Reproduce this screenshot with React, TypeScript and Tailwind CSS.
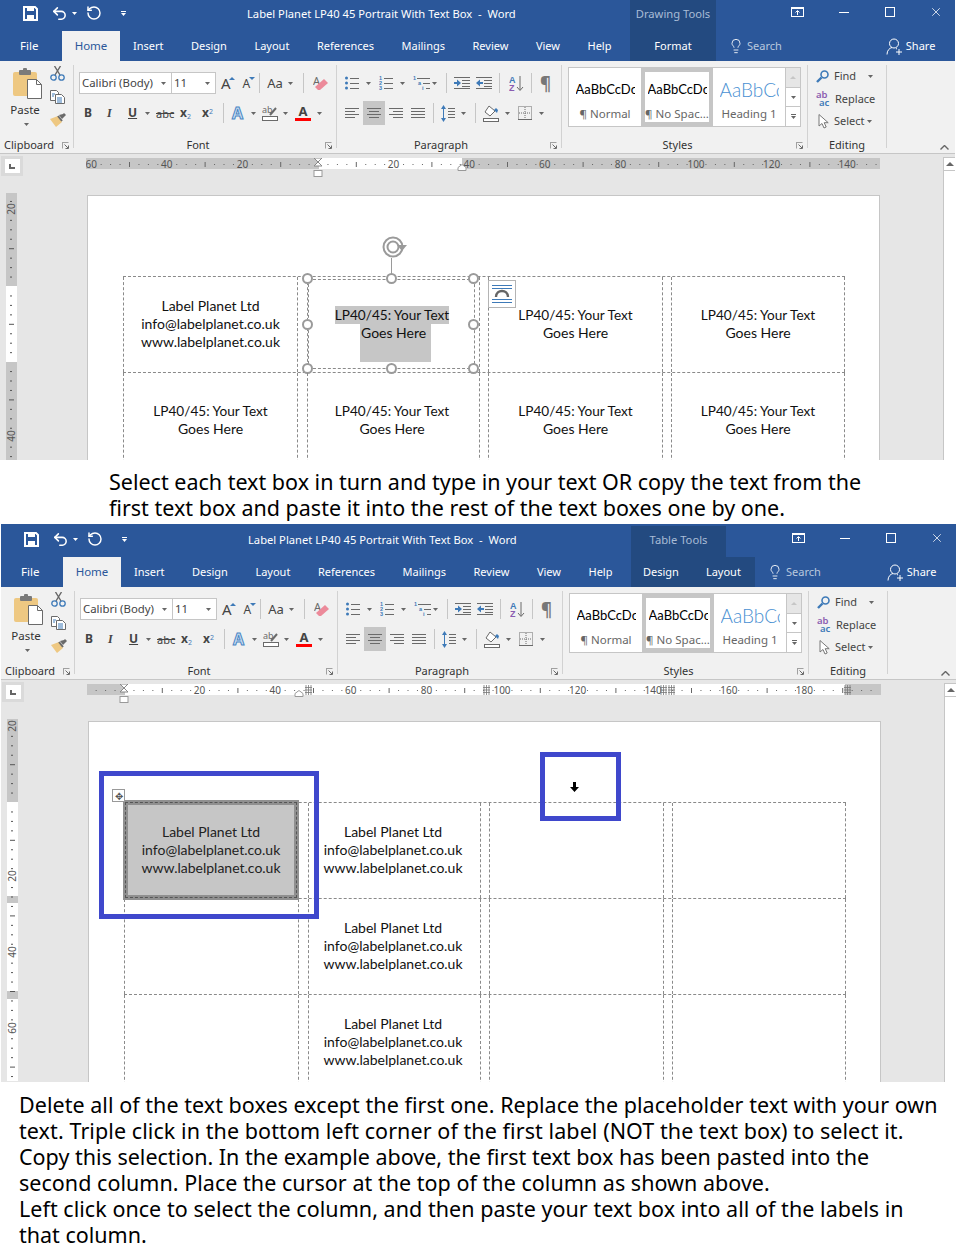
import type { ReactNode } from "react";
import { Lightbulb, RotateCcw, Undo2, X } from "lucide-react";

const GRAY = "#6a6a6a";
const BLUE = "#3e7ab8";

const Svg = ({ w, h, className = "", children }: { w: number; h: number; className?: string; children: ReactNode }) => (
  <svg width={w} height={h} viewBox={`0 0 ${w} ${h}`} className={`shrink-0 ${className}`}>
    {children}
  </svg>
);

const Caret = ({ className = "", color = "#666" }: { className?: string; color?: string }) => (
  <Svg w={5} h={3} className={className}>
    <polygon points="0,0 5,0 2.5,3" fill={color} />
  </Svg>
);

const Divider = ({ className = "" }: { className?: string }) => <span className={`w-px h-[20px] bg-[#c6c6c6] shrink-0 ${className}`} />;

// paragraph glyphs
const Lines = ({ className = "", rows }: { className?: string; rows: [number, number][] }) => (
  <Svg w={14} h={12} className={className}>
    {rows.map(([a, b], i) => (
      <rect key={i} x={a} y={i * 3 + 1} width={b - a} height={1} fill={GRAY} />
    ))}
  </Svg>
);

const Bullets = ({ className = "" }: { className?: string }) => (
  <Svg w={14} h={14} className={className}>
    {[2, 7, 12].map((y) => (
      <g key={y}>
        <circle cx={1.5} cy={y} r={1.5} fill={BLUE} />
        <rect x={5} y={y} width={9} height={1} fill={GRAY} />
      </g>
    ))}
  </Svg>
);

const Numbered = ({ className = "" }: { className?: string }) => (
  <Svg w={14} h={14} className={className}>
    {[1, 2, 3].map((n, i) => (
      <g key={n}>
        <text x={0} y={i * 5 + 4} fontSize={5.5} fontWeight={700} fill={BLUE} fontFamily="Liberation Sans, sans-serif">{n}</text>
        <rect x={5} y={i * 5 + 2} width={9} height={1} fill={GRAY} />
      </g>
    ))}
  </Svg>
);

const MultiLevel = ({ className = "" }: { className?: string }) => (
  <Svg w={17} h={14} className={className}>
    <text x={0} y={4} fontSize={5.5} fontWeight={700} fill={BLUE} fontFamily="Liberation Sans, sans-serif">1</text>
    <rect x={4} y={2} width={13} height={1} fill={GRAY} />
    <text x={5} y={9} fontSize={5.5} fontWeight={700} fill={BLUE} fontFamily="Liberation Sans, sans-serif">a</text>
    <rect x={10} y={7} width={7} height={1} fill={GRAY} />
    <text x={9} y={14} fontSize={5.5} fontWeight={700} fill={BLUE} fontFamily="Liberation Sans, sans-serif">i</text>
    <rect x={13} y={12} width={4} height={1} fill={GRAY} />
  </Svg>
);

const Indent = ({ className = "", flip = false }: { className?: string; flip?: boolean }) => (
  <Svg w={16} h={12} className={className}>
    <rect x={0} y={0} width={16} height={1} fill={GRAY} />
    <rect x={8} y={3} width={8} height={1} fill={GRAY} />
    <rect x={8} y={6} width={8} height={1} fill={GRAY} />
    <rect x={8} y={9} width={8} height={1} fill={GRAY} />
    <rect x={0} y={11} width={16} height={1} fill={GRAY} />
    {flip ? (
      <polygon points="7,6 3,2.5 3,5 0,5 0,7 3,7 3,9.5" fill={BLUE} />
    ) : (
      <polygon points="0,6 4,2.5 4,5 7,5 7,7 4,7 4,9.5" fill={BLUE} />
    )}
  </Svg>
);

const Sort = ({ className = "" }: { className?: string }) => (
  <Svg w={15} h={17} className={className}>
    <text x={0} y={8} fontSize={9} fontWeight={700} fill={BLUE} fontFamily="Liberation Sans, sans-serif">A</text>
    <text x={0} y={16} fontSize={9} fontWeight={700} fill="#8a5cb0" fontFamily="Liberation Sans, sans-serif">Z</text>
    <path d="M11 1v14M8 12l3 3.5 3-3.5" stroke={GRAY} fill="none" />
  </Svg>
);

const LineSpacing = ({ className = "" }: { className?: string }) => (
  <Svg w={14} h={17} className={className}>
    <path d="M2.5 2v13" stroke={BLUE} />
    <polygon points="2.5,0 5,4 0,4" fill={BLUE} />
    <polygon points="2.5,17 5,13 0,13" fill={BLUE} />
    {[3, 6, 9, 12].map((y) => (
      <rect key={y} x={7} y={y} width={7} height={1} fill={GRAY} />
    ))}
  </Svg>
);

const Shading = ({ className = "" }: { className?: string }) => (
  <Svg w={16} h={17} className={className}>
    <path d="M6 1l-4 6 5 4 5-5z" fill="#fff" stroke={GRAY} />
    <path d="M11 5l3 3 1-3-2-2z" fill={BLUE} />
    <rect x={0.5} y={13.5} width={15} height={3} fill="#fff" stroke={GRAY} />
  </Svg>
);

const Borders = ({ className = "" }: { className?: string }) => (
  <Svg w={14} h={14} className={className}>
    <rect x={0.5} y={0.5} width={13} height={13} fill="none" stroke={GRAY} strokeDasharray="1 1" />
    <path d="M7 1v12M1 7h12" stroke={GRAY} strokeDasharray="1 1" />
    <rect x={0} y={13} width={14} height={1} fill={GRAY} />
  </Svg>
);

const Clipboard = () => (
  <Svg w={29} h={31}>
    <rect x={0} y={4} width={24} height={24} rx={2} fill="#eec882" />
    <rect x={6} y={2} width={12} height={5} rx={1} fill="#7a7a7a" />
    <rect x={10} y={0} width={4} height={4} rx={1} fill="#7a7a7a" />
    <path d="M14.5 11.5h9l5 5v14h-14z" fill="#fff" stroke={GRAY} />
    <path d="M23.5 11.5v5h5" fill="none" stroke={GRAY} />
  </Svg>
);

const Cut = () => (
  <Svg w={15} h={15}>
    <path d="M4.500 0l5.500 9M10.500 0L5 9" stroke="#666" strokeWidth={1.4} />
    <circle cx={3.500} cy={11.500} r={2.700} fill="none" stroke={BLUE} strokeWidth={1.3} />
    <circle cx={11.500} cy={11.500} r={2.700} fill="none" stroke={BLUE} strokeWidth={1.3} />
  </Svg>
);

const CopyIcon = ({ className = "" }: { className?: string }) => (
  <Svg w={15} h={14} className={className}>
    <path d="M.5.5h6l2 2v8h-8z" fill="#fff" stroke={GRAY} />
    <path d="M5.5 4.5h6l3 3v6h-9z" fill="#fff" stroke={GRAY} />
    <path d="M7 8h5M7 10h5M7 12h5M2 4h3M2 6h2" stroke={BLUE} />
  </Svg>
);

const Brush = ({ className = "" }: { className?: string }) => (
  <Svg w={16} h={14} className={className}>
    <path d="M0 6l8-3 4 6-6 5z" fill="#eec882" />
    <path d="M9 2l3 4 4-4-2-2-1 1z" fill="#6a6a6a" />
    <path d="M8 3l4 5" stroke="#6a6a6a" strokeWidth={2} />
  </Svg>
);

const Eraser = ({ className = "" }: { className?: string }) => (
  <Svg w={15} h={16} className={className}>
    <text x={0} y={10} fontSize={11} fill={GRAY} fontFamily="Noto Sans, sans-serif">A</text>
    <path d="M2 12l9-8 4 4-8 7H5z" fill="#ec8a9a" />
  </Svg>
);

const Magnifier = ({ className = "" }: { className?: string }) => (
  <Svg w={13} h={13} className={className}>
    <circle cx={8.5} cy={4.5} r={3.5} fill="none" stroke={BLUE} strokeWidth={1.6} />
    <path d="M5.5 7.5L1 12" stroke={BLUE} strokeWidth={2.4} />
  </Svg>
);

const Pointer = ({ className = "" }: { className?: string }) => (
  <Svg w={11} h={15} className={className}>
    <path d="M1 .5v11.500l3-2.500 2 4.500 2.200-1-2-4.300h4z" fill="#fff" stroke="#777" />
  </Svg>
);

const SaveIcon = () => (
  <Svg w={15} h={15}>
    <path d="M1 1h11l2 2v11H1z" fill="none" stroke="#fff" strokeWidth={2} />
    <rect x={4} y={1} width={7} height={4} fill="#fff" />
    <rect x={4} y={9} width={7} height={5} fill="#fff" />
  </Svg>
);

const ShareIcon = ({ className = "" }: { className?: string }) => (
  <Svg w={17} h={17} className={className}>
    <circle cx={8} cy={5.5} r={4.5} fill="none" stroke="#fff" />
    <path d="M1 16.5c0-4 2.5-6.500 5-7M10 10.500l1 .5" fill="none" stroke="#fff" />
    <path d="M13 11v6M10 14h6" stroke="#fff" />
  </Svg>
);

const RestoreRibbon = ({ className = "" }: { className?: string }) => (
  <Svg w={13} h={10} className={className}>
    <rect x={0.5} y={0.5} width={12} height={9} fill="none" stroke="#fff" />
    <rect x={0} y={0} width={13} height={2} fill="#fff" />
    <path d="M6.500 8V4M4.500 5.500l2-2 2 2" fill="none" stroke="#fff" />
  </Svg>
);

const LayoutOptions = () => (
  <span className="absolute left-[-1px] top-[3px] flex w-[28px] h-[28px] items-center justify-center border border-[#b4b4b4] bg-white">
    <Svg w={20} h={19}>
      <rect x={0} y={0} width={20} height={1} fill={BLUE} />
      <rect x={0} y={3} width={20} height={1} fill={BLUE} />
      <path d="M4 12c0-8 12-8 12 0" fill="none" stroke="#666" strokeWidth={2.4} />
      <rect x={0} y={14} width={20} height={1} fill={BLUE} />
      <rect x={0} y={17} width={20} height={1} fill={BLUE} />
    </Svg>
  </span>
);

const Launcher = ({ className = "" }: { className?: string }) => (
  <Svg w={7} h={7} className={className}>
    <path d="M0 .5h6.500M.5 0v6.500" stroke="#a0a0a0" />
    <path d="M2.500 2.500L6 6M3.500 6.500h3v-3" fill="none" stroke={GRAY} />
  </Svg>
);

const Group = ({ className, label, labelClass = "justify-center", launcher, children }: { className: string; label: string; labelClass?: string; launcher?: ReactNode; children: ReactNode }) => (
  <div className={`relative flex flex-col shrink-0 h-full border-r border-[#d2d2d2] ${className}`}>
    <div className="flex-1 min-h-0">{children}</div>
    <div className={`flex items-center h-[16px] -mb-[4px] text-[11px] text-[#333] leading-none ${labelClass}`}>
      {label}
    </div>
    {launcher}
  </div>
);

const Ribbon = () => (
  <div className="flex h-[93px] pt-[4px] pb-[5px] bg-[#f1f1f1] border-b border-[#c6c6c6] text-[#444]">
    <Group
      className="w-[74px]"
      label="Clipboard"
      labelClass="pl-[4px]"
      launcher={<Launcher className="absolute right-[4px] -bottom-[1px]" />}
    >
      <div className="flex pl-[14px] pt-[3px]">
        <div className="flex flex-col items-center w-[26px]">
          <Clipboard />
          <span className="mt-[3px] -ml-[4px] text-[11.500px] leading-[16px] text-[#333]">Paste</span>
          <Caret className="mt-[5px] -ml-[2px]" />
        </div>
        <div className="flex flex-col ml-[10px] -mt-[2px]">
          <Cut />
          <CopyIcon className="mt-[9px]" />
          <Brush className="mt-[9px]" />
        </div>
      </div>
    </Group>

    <Group
      className="w-[263px]"
      label="Font"
      labelClass="justify-center pr-[14px]"
      launcher={<Launcher className="absolute right-[4px] -bottom-[1px]" />}
    >
      <div className="flex items-center h-[22px] mt-[7px] pl-[5px]">
        <div className="flex items-center w-[93px] h-[22px] pl-[2px] bg-white border border-[#c6c6c6] text-[11.400px] text-[#444]">
          <span className="flex-1">Calibri (Body)</span>
          <Caret className="mr-[5px]" />
        </div>
        <div className="flex items-center w-[44px] h-[22px] pl-[2px] bg-white border border-l-0 border-[#c6c6c6] text-[11.400px]">
          <span className="flex-1">11</span>
          <Caret className="mr-[5px]" />
        </div>
        <span className="relative ml-[5px] text-[15px] leading-none">A<span className="absolute -right-[4px] top-[1px] w-0 h-0 border-x-[3px] border-b-[3px] border-x-transparent border-b-[#3e7ab8]" /></span>
        <span className="relative ml-[12px] text-[12px] leading-none mt-[2px]">A<span className="absolute -right-[5px] -top-[1px] w-0 h-0 border-x-[3px] border-t-[3px] border-x-transparent border-t-[#3e7ab8]" /></span>
        <Divider className="ml-[9px]" />
        <span className="ml-[7px] w-[16px] text-[13px] leading-none">Aa</span>
        <Caret className="ml-[5px]" />
        <Divider className="ml-[10px]" />
        <Eraser className="ml-[9px]" />
      </div>
      <div className="flex items-center h-[22px] mt-[8px] pl-[10px]">
        <span className="w-[8px] text-[12px] font-bold leading-none">B</span>
        <span className="ml-[15px] w-[7px] text-[12px] font-bold italic leading-none" style={{ fontFamily: "Liberation Serif, serif" }}>I</span>
        <span className="ml-[14px] w-[9px] text-[12px] font-bold underline leading-none">U</span>
        <Caret className="ml-[8px]" />
        <span className="ml-[6px] w-[16px] text-[11px] line-through leading-none">abc</span>
        <span className="ml-[8px] w-[13px] text-[12px] font-bold leading-none">x<sub className="text-[7px] font-normal text-[#3e7ab8]">2</sub></span>
        <span className="ml-[9px] w-[12px] text-[12px] font-bold leading-none">x<sup className="text-[7px] font-normal text-[#3e7ab8]">2</sup></span>
        <Divider className="ml-[9px]" />
        <span className="ml-[8px] w-[14px] text-[16px] font-bold leading-none text-[#cfe0f2] [-webkit-text-stroke:1px_#4a86c4]">A</span>
        <Caret className="ml-[5px]" />
        <Svg w={16} h={16} className="ml-[6px]">
          <text x={0} y={8} fontSize={9} fill={GRAY} fontFamily="Noto Sans, sans-serif">ab</text>
          <path d="M8 10l6-7" stroke={GRAY} strokeWidth={2} />
          <rect x={0.5} y={11.500} width={15} height={4} fill="#fff" stroke={GRAY} />
        </Svg>
        <Caret className="ml-[5px]" />
        <span className="relative flex flex-col items-center w-[16px] ml-[7px] text-[13px] font-bold leading-none">A<span className="w-full h-[3px] bg-[#ff0000]" /></span>
        <Caret className="ml-[6px]" />
      </div>
    </Group>

    <Group
      className="w-[225px]"
      label="Paragraph"
      labelClass="justify-center pr-[16px]"
      launcher={<Launcher className="absolute right-[4px] -bottom-[1px]" />}
    >
      <div className="flex items-center h-[22px] mt-[7px] pl-[8px]">
        <Bullets />
        <Caret className="ml-[7px]" />
        <Numbered className="ml-[8px]" />
        <Caret className="ml-[7px]" />
        <MultiLevel className="ml-[8px]" />
        <Caret className="ml-[2px]" />
        <Divider className="ml-[9px]" />
        <Indent flip className="ml-[7px]" />
        <Indent className="ml-[6px]" />
        <Divider className="ml-[7px]" />
        <Sort className="ml-[9px]" />
        <Divider className="ml-[7px]" />
        <span className="ml-[8px] text-[17px] font-bold leading-none text-[#777]">¶</span>
      </div>
      <div className="flex items-center h-[22px] mt-[8px] pl-[8px]">
        <Lines rows={[[0, 14], [0, 10], [0, 14], [0, 10]]} />
        <span className="flex items-center justify-center w-[22px] h-[24px] ml-[4px] bg-[#c6c6c6]">
          <Lines rows={[[0, 14], [2, 12], [0, 14], [2, 12]]} />
        </span>
        <Lines className="ml-[4px]" rows={[[0, 14], [4, 14], [0, 14], [4, 14]]} />
        <Lines className="ml-[8px]" rows={[[0, 14], [0, 14], [0, 14], [0, 14]]} />
        <Divider className="ml-[8px]" />
        <LineSpacing className="ml-[7px]" />
        <Caret className="ml-[6px]" />
        <Divider className="ml-[9px]" />
        <Shading className="ml-[7px]" />
        <Caret className="ml-[6px]" />
        <Borders className="ml-[8px]" />
        <Caret className="ml-[7px]" />
      </div>
    </Group>

    <Group
      className="w-[246px]"
      label="Styles"
      labelClass="justify-center pr-[14px]"
      launcher={<Launcher className="absolute right-[4px] -bottom-[1px]" />}
    >
      <div className="flex w-[233px] h-[60px] mt-[2px] ml-[6px] bg-white border border-[#c6c6c6]">
        <StyleItem sample="AaBbCcDc" label="¶ Normal" />
        <StyleItem sample="AaBbCcDc" label="¶ No Spac..." active />
        <StyleItem sample="AaBbCc" label="Heading 1" heading />
        <div className="flex flex-col w-[15px] ml-auto border-l border-[#c6c6c6] divide-y divide-[#c6c6c6]">
          <span className="flex flex-1 items-center justify-center bg-[#e6e6e6]"><span className="w-0 h-0 border-x-[3px] border-b-[3px] border-x-transparent border-b-[#c6c6c6]" /></span>
          <span className="flex flex-1 items-center justify-center"><Caret /></span>
          <span className="flex flex-1 flex-col items-center justify-center gap-[1px]"><span className="w-[5px] h-px bg-[#666]" /><Caret /></span>
        </div>
      </div>
    </Group>

    <Group className="w-[79px]" label="Editing">
      <div className="flex flex-col pl-[8px] pt-[3px] text-[11px] text-[#444]">
        <div className="flex items-center h-[16px]">
          <Magnifier />
          <span className="ml-[5px] w-[26px]">Find</span>
          <Caret className="ml-[8px]" />
        </div>
        <div className="flex items-center h-[16px] mt-[7px]">
          <span className="flex w-[17px] flex-col text-[9.500px] font-semibold leading-[8px]"><span className="text-[#8a5cb0]">ab</span><span className="pl-[3px] text-[#3e7ab8]">ac</span></span>
          <span className="ml-[2px]">Replace</span>
        </div>
        <div className="flex items-center h-[16px] mt-[6px]">
          <Pointer className="ml-[2px]" />
          <span className="ml-[5px]">Select</span>
          <Caret className="ml-[2px]" />
        </div>
      </div>
    </Group>

    <div className="flex flex-1 items-end justify-end pr-[6px] -mb-[2px]">
      <Svg w={9} h={5}>
        <path d="M.5 4.500l4-4 4 4" fill="none" stroke="#666" strokeWidth={1.4} />
      </Svg>
    </div>
  </div>
);

function StyleItem({ sample, label, active, heading }: { sample: string; label: string; active?: boolean; heading?: boolean }) {
  return (
    <div className={`flex flex-col items-center w-[72px] h-[58px] ${active ? "border-4 border-[#c6c6c6] pt-[6px]" : "pt-[10px]"}`}>
      <div className={`flex items-center w-[59px] h-[24px] overflow-hidden whitespace-nowrap ${heading ? "text-[19px] font-light text-[#4a90d2]" : "text-[13px] text-black"}`} style={{ fontFamily: "Lato, sans-serif" }}>
        {sample}
      </div>
      <div className="mt-[4px] text-[11.500px] leading-[16px] text-[#666] whitespace-nowrap">{label}</div>
    </div>
  );
}

const GridMark = ({ x }: { x: number }) => (
  <g>
    <path d={`M${x + 1} 1v10M${x + 3.500} 1v10M${x + 6} 1v10M${x} 3.500h7M${x} 6h7M${x} 8.500h7`} stroke="#777" strokeWidth={0.8} />
  </g>
);

// horizontal ruler, x values are counted from the ruler's left edge
function HRuler({ origin, white, marks = [], right }: { origin: number; white: [number, number]; marks?: number[]; right: number }) {
  const ticks = [];
  for (let n = -40; n < 100; n++) {
    const x = origin + n * 9.45;
    if (x < 1 || x > 792 || n === 0) continue;
    if (n % 8 === 0) {
      ticks.push(
        <text key={n} x={x} y={9.500} textAnchor="middle" fontSize={10} fill="#555" fontFamily="Noto Sans, sans-serif">
          {Math.abs(n / 8) * 20}
        </text>,
      );
    } else if (n % 4 === 0) {
      ticks.push(<rect key={n} x={x} y={4} width={1} height={5} fill="#666" />);
    } else {
      ticks.push(<rect key={n} x={x} y={6} width={1} height={1} fill="#666" />);
    }
  }
  return (
    <Svg w={794} h={20} className="block">
      <rect x={0} y={0} width={794} height={11} fill="#c6c6c6" />
      <rect x={white[0]} y={0} width={white[1] - white[0]} height={11} fill="#fff" />
      {ticks}
      {marks.map((x) => (
        <GridMark key={x} x={x} />
      ))}
      <path d={`M${origin - 4} 0h8l-8 8h8l-8 -8`} fill="#fff" stroke="#888" />
      <rect x={origin - 4} y={12.500} width={8} height={6} fill="#fff" stroke="#999" />
      <path d={`M${right - 4} 12.500v-3l4-3 4 3v3z`} fill="#fff" stroke="#999" />
    </Svg>
  );
}

function VRuler({ height, origin, grays, labels }: { height: number; origin: number; grays: [number, number][]; labels: [number, string][] }) {
  const ticks = [];
  for (let n = -20; n < 60; n++) {
    const y = origin + n * 9.45;
    if (y < 0 || y > height || n === 0 || n % 8 === 0) continue;
    if (n % 4 === 0) ticks.push(<rect key={n} x={3} y={y} width={5} height={1} fill="#555" />);
    else ticks.push(<rect key={n} x={4} y={y} width={2} height={1} fill="#555" />);
  }
  return (
    <Svg w={11} h={height} className="block">
      <rect width={11} height={height} fill="#fff" />
      {grays.map(([a, b]) => (
        <rect key={a} x={0} y={a} width={11} height={b - a} fill="#c6c6c6" />
      ))}
      {ticks}
      {labels.map(([y, t]) => (
        <text key={y} transform={`translate(9 ${y}) rotate(-90)`} textAnchor="middle" fontSize={10} fill="#555" fontFamily="Noto Sans, sans-serif">
          {t}
        </text>
      ))}
    </Svg>
  );
}

const CELL_W = ["w-[175px]", "w-[173px] pr-[3px]", "w-[175px]", "w-[174px]"];
const GAP = ["w-[9px]", "w-[8px]", "w-[8px]"];

const Address = () => (
  <>
    <span>Label Planet Ltd</span>
    <span>info@labelplanet.co.uk</span>
    <span>www.labelplanet.co.uk</span>
  </>
);

const YourText = () => (
  <>
    <span className="text-[13.600px]">LP40/45: Your Text</span>
    <span>Goes Here</span>
  </>
);

function Handle({ className }: { className: string }) {
  return <span className={`absolute w-[11px] h-[11px] rounded-full bg-white border-2 border-[#9a9a9a] ${className}`} />;
}

const SelectedBox = () => (
  <div className="absolute left-0 top-0 w-full h-full">
    <div className="absolute left-0 top-[2px] w-[167px] h-[90px] border border-dashed border-[#8a8a8a]" />
    <span className="absolute left-[83px] -top-[19px] w-px h-[21px] bg-[#9a9a9a]" />
    <Svg w={25} h={24} className="absolute left-[74px] -top-[42px]">
      <circle cx={11} cy={12} r={9.500} fill="none" stroke="#9a9a9a" strokeWidth={2} />
      <circle cx={11} cy={12} r={5.500} fill="none" stroke="#9a9a9a" strokeWidth={2} />
      <polygon points="15,10 25,10 20,16" fill="#9a9a9a" />
    </Svg>
    <Handle className="-left-[6px] -top-[4px]" />
    <Handle className="left-[78px] -top-[4px]" />
    <Handle className="left-[160px] -top-[4px]" />
    <Handle className="-left-[6px] top-[42px]" />
    <Handle className="left-[160px] top-[42px]" />
    <Handle className="-left-[6px] top-[86px]" />
    <Handle className="left-[78px] top-[86px]" />
    <Handle className="left-[160px] top-[86px]" />
  </div>
);

function Cell({ col, children, extra }: { col: number; children?: ReactNode; extra?: ReactNode }) {
  return (
    <div className={`relative flex flex-col items-center justify-center shrink-0 h-[95px] pb-[2px] border-x border-dashed border-[#8a8a8a] text-[14px] leading-[18px] text-[#111] whitespace-nowrap ${CELL_W[col]}`} style={{ fontFamily: "Lato, sans-serif" }}>
      {children}
      {extra}
    </div>
  );
}

function LabelRow({ cells, first }: { cells: ReactNode[]; first?: boolean }) {
  return (
    <div className={`flex border-b border-dashed border-[#8a8a8a] w-[722px] ${first ? "border-t h-[97px]" : "h-[96px]"}`}>
      {cells.map((c, i) => (
        <div key={i} className="contents">
          {c}
          {i < 3 && <span className={`shrink-0 ${GAP[i]}`} />}
        </div>
      ))}
    </div>
  );
}

function Chrome({ ctx, title }: { ctx: "drawing" | "table"; title: string }) {
  const drawing = ctx === "drawing";
  return (
    <div className="text-white">
      <div className="flex h-[31px] text-[11.200px] items-stretch">
        <div className="flex items-center w-[247px] pl-[23px] pb-[5px] shrink-0">
          <SaveIcon />
          <Undo2 size={17} strokeWidth={2.2} className="ml-[13px]" />
          <Caret className="ml-[4px]" color="#fff" />
          <RotateCcw size={16} strokeWidth={2.2} className="ml-[9px]" />
          <span className="ml-[19px] flex flex-col items-center gap-[1px]"><span className="w-[5px] h-px bg-white" /><Caret color="#fff" /></span>
        </div>
        <div className="flex items-center w-[383px] pb-[3px] shrink-0 whitespace-pre">{title}</div>
        <div className={`flex items-center justify-center pb-[3px] shrink-0 bg-[#234a80] text-[#a9bcd6] ${drawing ? "w-[86px]" : "w-[95px]"}`}>
          {drawing ? "Drawing Tools" : "Table Tools"}
        </div>
        <div className={`flex items-center pb-[7px] ${drawing ? "ml-[75px]" : "ml-[66px]"}`}>
          <RestoreRibbon />
          <span className="ml-[35px] w-[10px] h-px bg-white" />
          <span className="ml-[36px] w-[10px] h-[10px] border border-white" />
          <X size={14} strokeWidth={1.3} className="ml-[34px]" />
        </div>
      </div>
      <div className="flex h-[30px] items-stretch text-[11px]">
        <div className="flex items-center w-[62px] pl-[20px] text-[11.500px] shrink-0">File</div>
        <div className="flex items-center justify-center w-[58px] bg-[#f1f1f1] text-[11.500px] text-[#2b579a] shrink-0">Home</div>
        <div className="flex items-center w-[510px] pl-[13px] gap-[27.500px] shrink-0 whitespace-nowrap">
          <span>Insert</span>
          <span>Design</span>
          <span>Layout</span>
          <span>References</span>
          <span>Mailings</span>
          <span>Review</span>
          <span>View</span>
          <span>Help</span>
        </div>
        {drawing ? (
          <div className="flex items-center justify-center w-[86px] bg-[#234a80] shrink-0">Format</div>
        ) : (
          <div className="flex items-center w-[124px] pl-[12px] gap-[27px] bg-[#234a80] shrink-0">
            <span>Design</span>
            <span>Layout</span>
          </div>
        )}
        <div className="flex items-center ml-[12px]">
          <Lightbulb size={16} strokeWidth={1.3} />
          <span className="ml-[3px] text-[#b9c8de]">Search</span>
        </div>
        <div className={`flex items-center ${drawing ? "ml-[104px]" : "ml-[66px]"}`}>
          <ShareIcon />
          <span className="ml-[3px]">Share</span>
        </div>
      </div>
    </div>
  );
}

function WordWindow({ ctx, title, rowsTop, offset, hruler, vruler, overlay, bodyH }: {
  ctx: "drawing" | "table";
  title: string;
  rowsTop: ReactNode[][];
  offset: string;
  hruler: ReactNode;
  vruler: ReactNode;
  overlay?: ReactNode;
  bodyH: string;
}) {
  return (
    <div className={`flex flex-col overflow-hidden bg-[#2b579a] w-[955px] ${offset}`}>
      <Chrome ctx={ctx} title={title} />
      <Ribbon />
      <div className={`flex bg-[#e6e6e6] ${bodyH}`}>
        <div className="flex flex-col w-[943px] min-h-0">
          <div className="flex h-[39px] shrink-0 pt-[4px]">
            <div className="flex items-start w-[86px] pl-[1px] shrink-0">
              <div className="flex w-[22px] h-[20px] -mt-[2px] items-center justify-center bg-[#dadada]">
                <div className="flex w-[15px] h-[14px] items-center justify-center bg-white">
                  <span className="w-[6px] h-[5px] border-l-2 border-b-2 border-[#666]" />
                </div>
              </div>
            </div>
            {hruler}
          </div>
          <div className="flex flex-1 min-h-0 pl-[6px]">
            <div className="w-[11px] shrink-0 overflow-hidden">{vruler}</div>
            <div className="relative w-[793px] ml-[70px] mt-[2px] pt-[80px] pl-[35px] bg-white border-x border-t border-[#c6c6c6] overflow-hidden">
              {rowsTop.map((cells, i) => (
                <LabelRow key={i} cells={cells} first={i === 0} />
              ))}
              {overlay}
            </div>
          </div>
        </div>
        <div className="w-[12px] mt-[3px] bg-white border-l border-[#c6c6c6]">
          <div className="flex h-[14px] items-center justify-center border-y border-[#c6c6c6]">
            <span className="w-0 h-0 border-x-[4px] border-b-[4px] border-x-transparent border-b-[#666]" />
          </div>
        </div>
      </div>
    </div>
  );
}

const Caption = ({ className, lines }: { className: string; lines: [string, string?][] }) => (
  <div className={`bg-white text-black text-[21.500px] leading-[26px] whitespace-nowrap ${className}`} style={{ fontFamily: "Noto Sans, sans-serif" }}>
    {lines.map(([l, track]) => (
      <div key={l} className={track}>{l}</div>
    ))}
  </div>
);

const TITLE = "Label Planet LP40 45 Portrait With Text Box  -  Word";

export default function App() {
  const top: ReactNode[][] = [
    [
      <Cell col={0}><Address /></Cell>,
      <Cell col={1} extra={<SelectedBox />}>
        <span className="bg-[#c6c6c6] text-center text-[13.600px]">LP40/45: Your Text</span>
        <span className="w-[71px] h-[38px] -mb-[20px] ml-[7px] pl-[1px] bg-[#c6c6c6] text-left">Goes Here</span>
      </Cell>,
      <Cell col={2} extra={<LayoutOptions />}><YourText /></Cell>,
      <Cell col={3}><YourText /></Cell>,
    ],
    [
      <Cell col={0}><YourText /></Cell>,
      <Cell col={1}><YourText /></Cell>,
      <Cell col={2}><YourText /></Cell>,
      <Cell col={3}><YourText /></Cell>,
    ],
  ];
  const second = (selected: boolean, addr: boolean) => [
    selected ? (
      <div className="relative z-10 flex flex-col items-center justify-center self-start shrink-0 w-[176px] h-[100px] -mt-[3px] -ml-[1px] border-[5px] border-[#909090] bg-[#c6c6c6] text-[14px] leading-[18px] text-[#222] whitespace-nowrap" style={{ fontFamily: "Lato, sans-serif" }}>
        <Address />
        <span className="absolute -inset-[3px] border border-dashed border-[#555]" />
      </div>
    ) : (
      <Cell col={0} />
    ),
    <Cell col={1}>{addr && <Address />}</Cell>,
    <Cell col={2} />,
    <Cell col={3} />,
  ];

  return (
    <div className="relative w-[956px] h-[1256px] overflow-hidden bg-white" style={{ fontFamily: "Noto Sans, sans-serif" }}>
      <WordWindow
        ctx="drawing"
        title={TITLE}
        offset="h-[460px]"
        bodyH="h-[306px]"
        rowsTop={top}
        hruler={<HRuler origin={232} white={[233, 376]} right={376} />}
        vruler={<VRuler height={267} origin={93} grays={[[0, 93], [169, 267]]} labels={[[16, "20"], [243, "40"]]} />}
      />
      <Caption className="h-[64px] pl-[109px] pt-[9px]" lines={[
        ["Select each text box in turn and type in your text OR copy the text from the"],
        ["first text box and paste it into the rest of the text boxes one by one."],
      ]} />
      <WordWindow
        ctx="table"
        title={TITLE}
        offset="h-[558px] ml-[1px] pt-[2px]"
        bodyH="h-[402px]"
        rowsTop={[second(true, true), second(false, true), second(false, true)]}
        hruler={
          <HRuler origin={37} white={[38, 758]} right={212} marks={[218, 396, 573, 581, 757]} />
        }
        vruler={
          <VRuler
            height={362}
            origin={83}
            grays={[[0, 83], [177, 184], [272, 280]]}
            labels={[[7, "20"], [157, "20"], [233, "40"], [309, "60"]]}
          />
        }
        overlay={
          <>
            <span className="absolute z-20 left-[23px] top-[67px] flex w-[13px] h-[13px] items-center justify-center bg-white border border-[#999] text-[10px] leading-none text-[#555]">✥</span>
            <div className="absolute z-20 left-[10px] top-[49px] w-[220px] h-[148px] border-[5px] border-[#3f48cc]" />
            <div className="absolute z-20 left-[451px] top-[30px] w-[81px] h-[69px] border-[5px] border-[#3f48cc]">
              <Svg w={9} h={10} className="absolute left-[25px] top-[25px]">
                <polygon points="3,0 6,0 6,5 9,5 4.500,10 0,5 3,5" fill="#000" />
              </Svg>
            </div>
          </>
        }
      />
      <Caption className="h-[174px] pl-[19px] pt-[10px]" lines={[
        ["Delete all of the text boxes except the first one. Replace the placeholder text with your own", "tracking-[0.04px]"],
        ["text. Triple click in the bottom left corner of the first label (NOT the text box) to select it.", "tracking-[0.08px]"],
        ["Copy this selection. In the example above, the first text box has been pasted into the"],
        ["second column. Place the cursor at the top of the column as shown above.", "tracking-[0.03px]"],
        ["Left click once to select the column, and then paste your text box into all of the labels in", "tracking-[0.04px]"],
        ["that column."],
      ]} />
    </div>
  );
}
